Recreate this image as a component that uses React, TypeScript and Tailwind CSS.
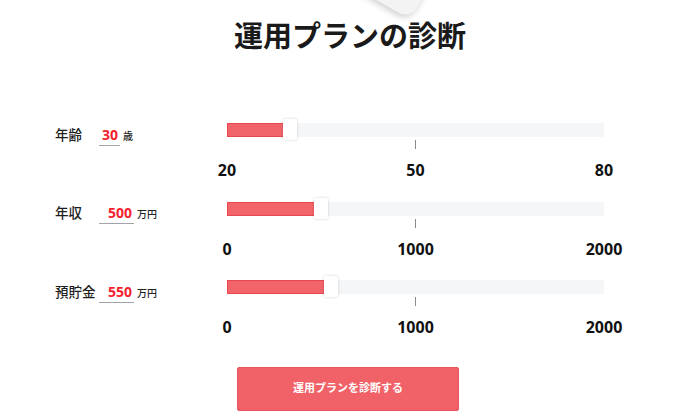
import React from "react";

const FONT = { fontFamily: '"Noto Sans", "Noto Sans CJK JP", sans-serif' };

type RowProps = {
  label: string;
  value: number;
  unit: string;
  min: number;
  max: number;
  mid: number;
  inputW: string;
};

function Row({ label, value, unit, min, max, mid, inputW }: RowProps) {
  const pct = ((value - min) / (max - min)) * 100;
  return (
    <div className="flex h-[78.5px]">
      <div className="w-[227px] pl-[55px] pt-[11.5px]">
        <div className="flex items-baseline">
          <span className="w-[44px] text-[13.5px] font-medium leading-[20px] text-[#1e1e1e]">{label}</span>
          <span
            className={`${inputW} border-b border-[#a3a3a8] text-right pr-[2px] text-[14px] leading-[20px] font-bold text-[#f5222d]`}
          >
            {value}
          </span>
          <span className="ml-[3px] text-[10px] font-medium leading-[20px] text-[#222]">{unit}</span>
        </div>
      </div>
      <div className="w-[377px]">
        <div className="relative mt-[10px] h-[14px] bg-[#f5f6f8]">
          <div
            className="absolute left-0 top-0 h-[14px] bg-[#f0646a] border border-[#e8474e]"
            style={{ width: `${pct}%` }}
          />
          <div
            className="absolute top-[-4px] h-[21px] w-[14px] -translate-x-1/2 bg-white rounded-[2px] shadow-[0_0_3px_rgba(0,0,0,0.18)]"
            style={{ left: `${pct}%` }}
          />
        </div>
        <div className="mx-auto mt-[3px] h-[9px] w-px bg-[#8a8a8a]" />
        <div className="relative mt-[11px] h-[20px] text-[16px] leading-[20px] font-bold text-[#111]">
          <span className="absolute left-0 -translate-x-1/2">{min}</span>
          <span className="absolute left-1/2 -translate-x-1/2">{mid}</span>
          <span className="absolute left-full -translate-x-1/2">{max}</span>
        </div>
      </div>
    </div>
  );
}

export default function App() {
  return (
    <div className="relative h-[419px] w-[700px] overflow-hidden bg-white" style={FONT}>
      <div className="absolute left-[352px] top-[-136px] h-[140px] w-[100px] rotate-[30deg] rounded-[14px] bg-[#f3f3f3] shadow-[0_3px_6px_rgba(0,0,0,0.18)]" />
      <div className="relative">
        <h1 className="pt-[21px] text-center text-[29px] font-bold leading-[29px] text-[#1a1a1a]">
          運用プランの診断
        </h1>
        <div className="mt-[63px]">
          <Row label="年齢" value={30} unit="歳" min={20} max={80} mid={50} inputW="w-[21px]" />
          <Row label="年収" value={500} unit="万円" min={0} max={2000} mid={1000} inputW="w-[35px]" />
          <Row label="預貯金" value={550} unit="万円" min={0} max={2000} mid={1000} inputW="w-[35px]" />
        </div>
        <div className="pl-[237px] pt-[18px]">
          <button className="flex h-[44px] w-[222px] items-center justify-center rounded-[2px] border border-[#e9555c] bg-[#f06268] text-[11px] font-bold text-white">
            運用プランを診断する
          </button>
        </div>
      </div>
    </div>
  );
}
